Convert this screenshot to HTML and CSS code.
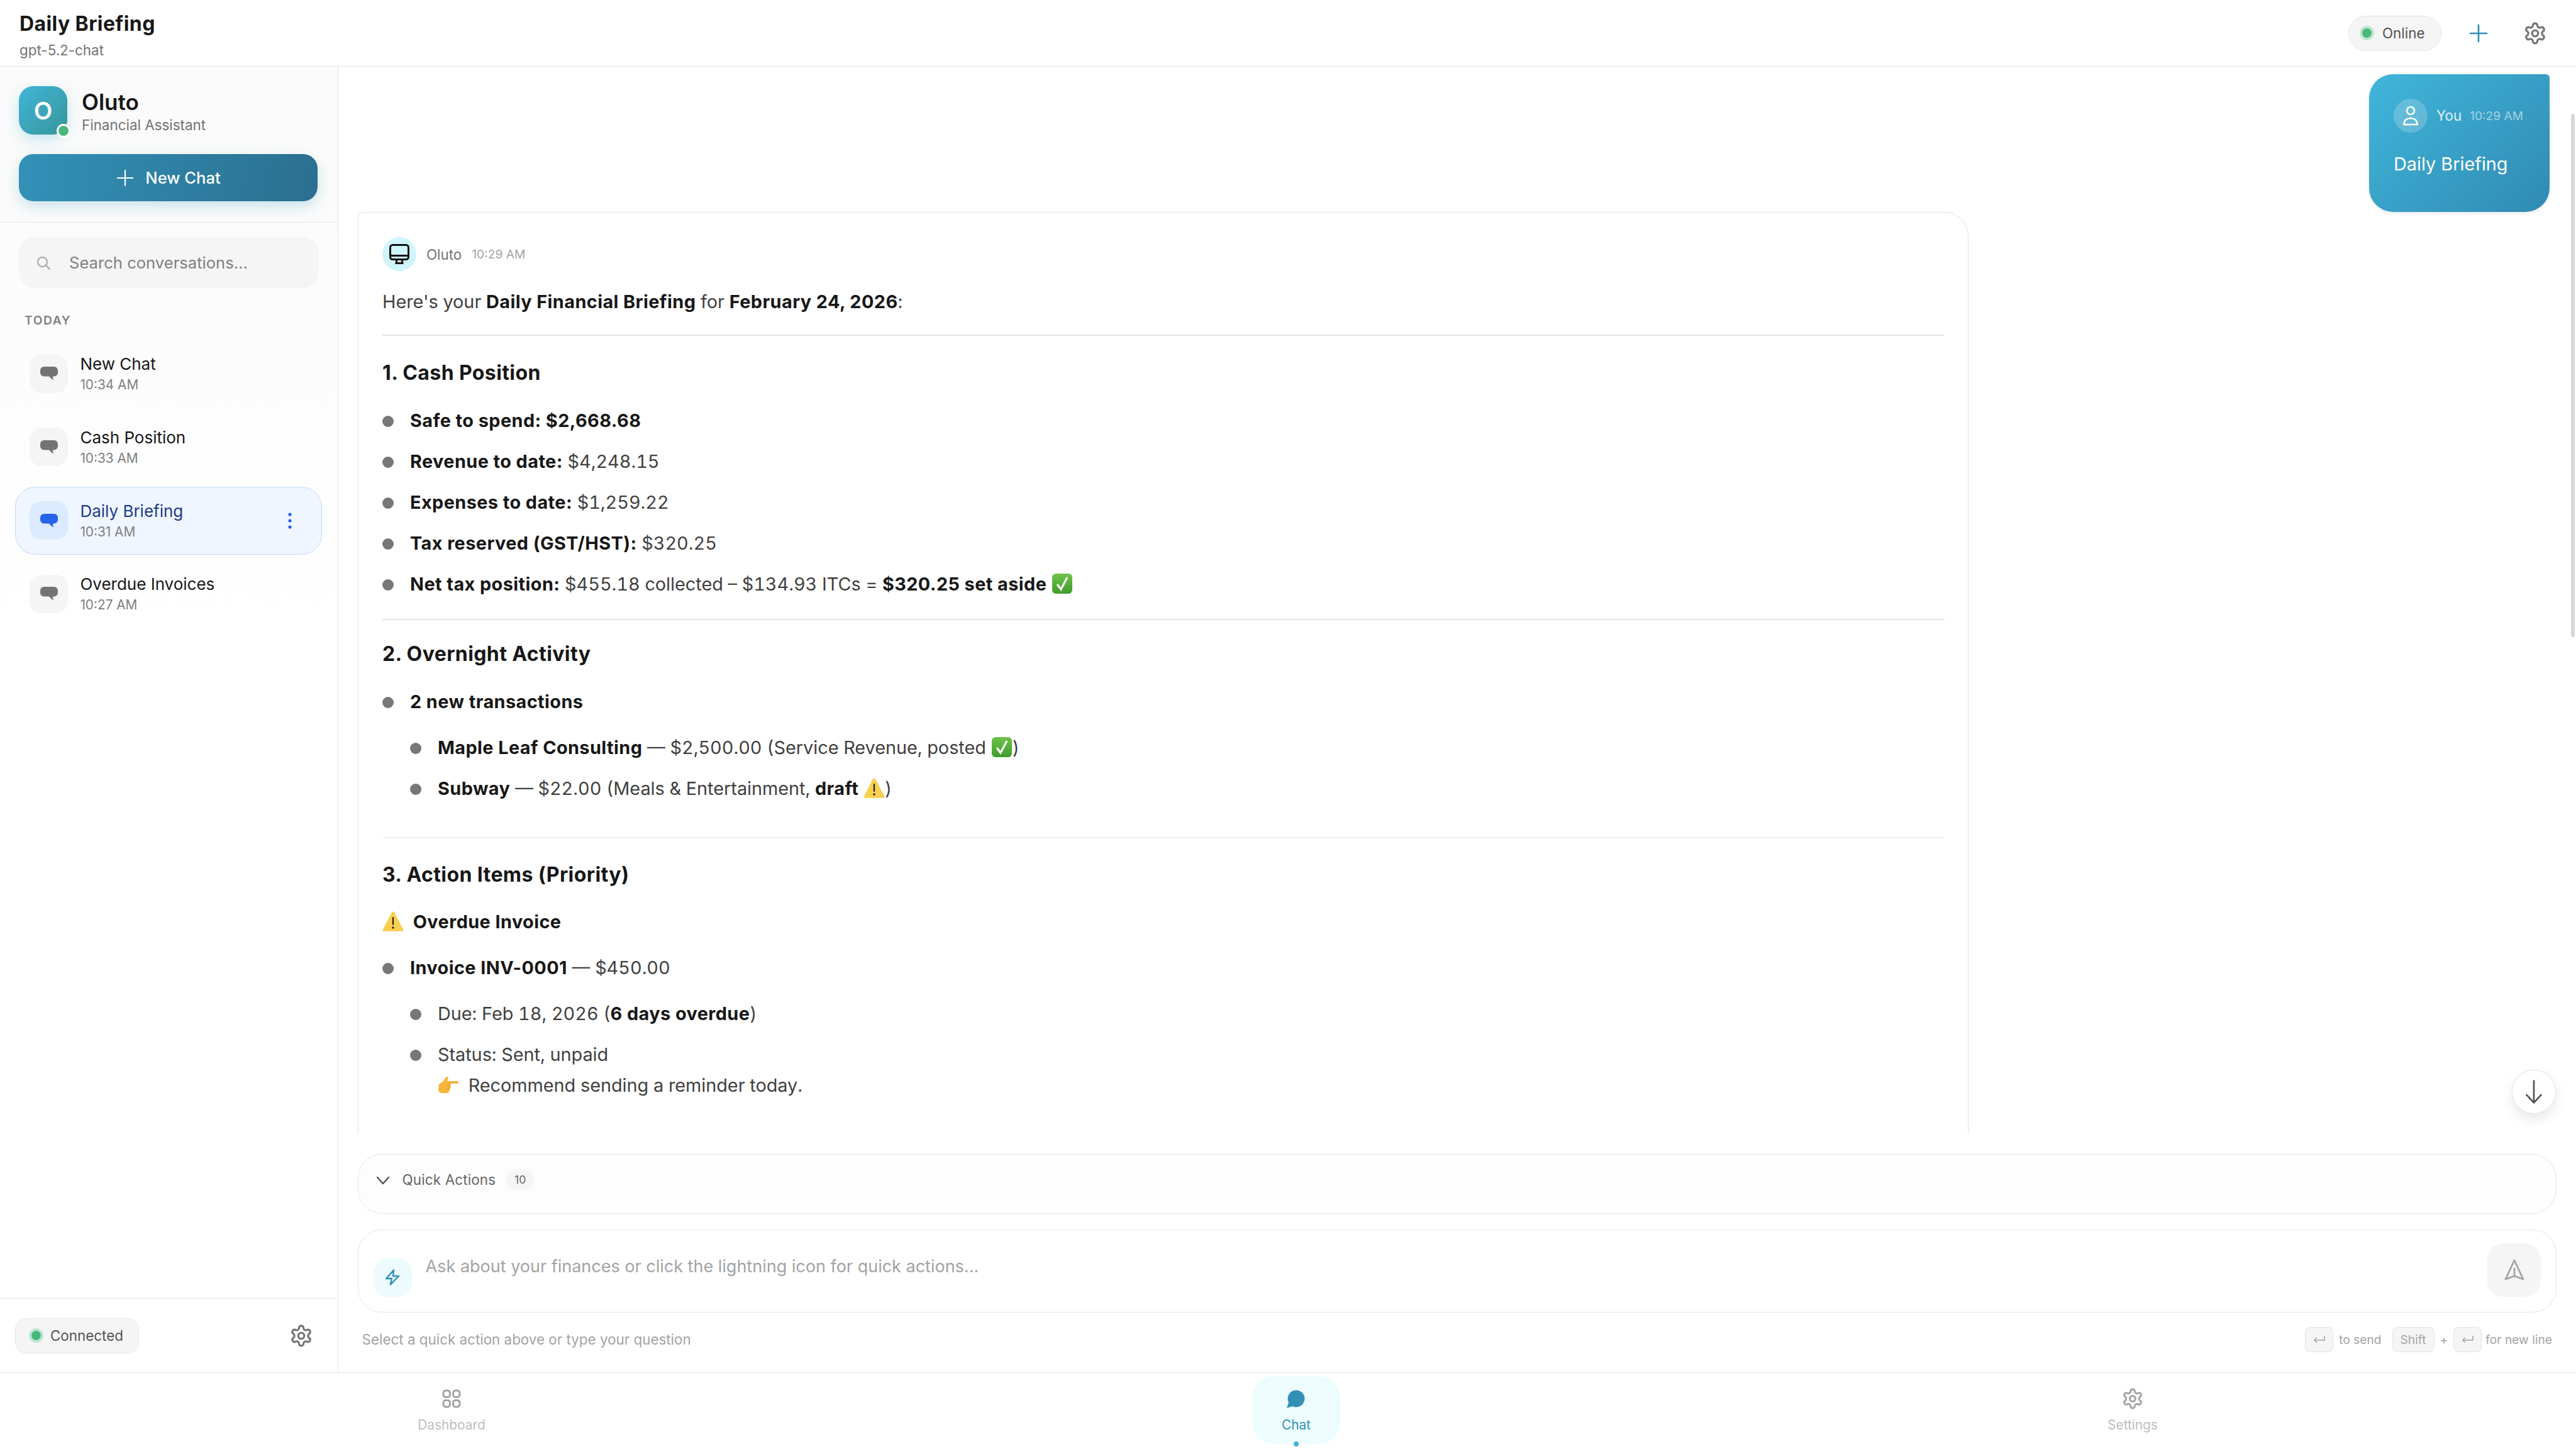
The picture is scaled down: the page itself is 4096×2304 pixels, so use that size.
FILE: index.html
```html
<!DOCTYPE html>
<html lang="en">
<head>
<meta charset="utf-8">
<title>Daily Briefing</title>
<link rel="stylesheet" href="styles.css">
</head>
<body>
<svg class="defs" aria-hidden="true">
  <symbol id="gear" viewBox="0 0 24 24"><path fill="none" stroke="currentColor" stroke-width="2" stroke-linecap="round" stroke-linejoin="round" d="M12.22 2h-.44a2 2 0 0 0-2 2v.18a2 2 0 0 1-1 1.73l-.43.25a2 2 0 0 1-2 0l-.15-.08a2 2 0 0 0-2.73.73l-.22.38a2 2 0 0 0 .73 2.73l.15.1a2 2 0 0 1 1 1.72v.51a2 2 0 0 1-1 1.74l-.15.09a2 2 0 0 0-.73 2.73l.22.38a2 2 0 0 0 2.73.73l.15-.08a2 2 0 0 1 2 0l.43.25a2 2 0 0 1 1 1.73V20a2 2 0 0 0 2 2h.44a2 2 0 0 0 2-2v-.18a2 2 0 0 1 1-1.73l.43-.25a2 2 0 0 1 2 0l.15.08a2 2 0 0 0 2.73-.73l.22-.39a2 2 0 0 0-.73-2.73l-.15-.08a2 2 0 0 1-1-1.74v-.5a2 2 0 0 1 1-1.74l.15-.09a2 2 0 0 0 .73-2.73l-.22-.38a2 2 0 0 0-2.73-.73l-.15.08a2 2 0 0 1-2 0l-.43-.25a2 2 0 0 1-1-1.73V4a2 2 0 0 0-2-2z"/><circle cx="12" cy="12" r="3" fill="none" stroke="currentColor" stroke-width="2"/></symbol>
  <symbol id="bubble" viewBox="0 0 28 22"><path fill="currentColor" d="M6 0h16a6 6 0 0 1 6 6v3.500a6 6 0 0 1-6 6h-2l.6 6.200-6.800-6.200H6a6 6 0 0 1-6-6V6a6 6 0 0 1 6-6z"/></symbol>
  <symbol id="check" viewBox="0 0 34 34"><defs><linearGradient id="chk" x1="0" y1="0" x2="0" y2="1"><stop offset="0" stop-color="#6fc24a"/><stop offset="1" stop-color="#3f9c2c"/></linearGradient></defs><rect x="1" y="1" width="32" height="32" rx="6" fill="url(#chk)"/><path d="M9 18l6 8L25 7" fill="none" stroke="#fff" stroke-width="3.200"/></symbol>
  <symbol id="warn" viewBox="0 0 34 34"><path d="M17 1.500c1 0 1.700.6 2.200 1.600l14 27c.6 1.400-.2 2.700-1.800 2.700H2.600c-1.600 0-2.400-1.300-1.800-2.700l14-27c.5-1 1.200-1.600 2.200-1.600z" fill="#f9cf50"/><rect x="15.900" y="10" width="2.200" height="13" rx="1.100" fill="#222"/><circle cx="17" cy="27" r="1.700" fill="#222"/></symbol>
  <symbol id="hand" viewBox="0 0 34 30"><path d="M2 14c2-2 5-3 7-5l4-6c1-2 4-1 4 1l-2 5h16c3 0 3 4 0 4H20c1 1 1 3 0 4 1 1 1 3-.5 4 .5 1.500 0 3-1.500 3.500 0 2-1 3.500-3 3.500H8c-4 0-7-2-7-6z" fill="#f6b63a"/><path d="M15 14h5M15 18h5M14 22h5" stroke="#d98f1f" stroke-width="1" fill="none"/></symbol>
</svg>

<header class="topbar">
  <div class="topbar-title">
    <h1 class="title">Daily Briefing</h1>
    <div class="subtitle">gpt-5.2-chat</div>
  </div>
  <div class="topbar-actions">
    <div class="status-pill"><span class="status-dot"></span>Online</div>
    <svg class="icon-plus" viewBox="0 0 30 30"><path d="M15 2v26M2 15h26" fill="none" stroke="currentColor" stroke-width="2.600" stroke-linecap="round"/></svg>
    <svg class="icon-gear"><use href="#gear"/></svg>
  </div>
</header>

<div class="workspace">
  <aside class="sidebar">
    <div class="side-head">
      <div class="brand">
        <div class="brand-logo">O<span class="brand-online"></span></div>
        <div>
          <div class="brand-name">Oluto</div>
          <div class="brand-role">Financial Assistant</div>
        </div>
      </div>
      <button class="new-chat">
        <svg class="new-plus" viewBox="0 0 30 30"><path d="M15 3v24M3 15h24" fill="none" stroke="currentColor" stroke-width="2.200" stroke-linecap="round"/></svg>
        New Chat
      </button>
    </div>
    <div class="side-body">
      <div class="search">
        <svg class="search-icon" viewBox="0 0 24 24"><circle cx="10.500" cy="10.500" r="7.500" fill="none" stroke="currentColor" stroke-width="2"/><path d="M16 16l6 6" stroke="currentColor" stroke-width="2" stroke-linecap="round"/></svg>
        Search conversations...
      </div>
      <div class="group-label">TODAY</div>
      <div class="conv-list">
        <div class="conv">
          <div class="conv-icon"><svg class="conv-bubble"><use href="#bubble"/></svg></div>
          <div><div class="conv-title">New Chat</div><div class="conv-time">10:34 AM</div></div>
        </div>
        <div class="conv">
          <div class="conv-icon"><svg class="conv-bubble"><use href="#bubble"/></svg></div>
          <div><div class="conv-title">Cash Position</div><div class="conv-time">10:33 AM</div></div>
        </div>
        <div class="conv active">
          <div class="conv-icon"><svg class="conv-bubble"><use href="#bubble"/></svg></div>
          <div><div class="conv-title">Daily Briefing</div><div class="conv-time">10:31 AM</div></div>
          <svg class="conv-more" viewBox="0 0 8 28"><circle cx="4" cy="4" r="2.600" fill="currentColor"/><circle cx="4" cy="14" r="2.600" fill="currentColor"/><circle cx="4" cy="24" r="2.600" fill="currentColor"/></svg>
        </div>
        <div class="conv">
          <div class="conv-icon"><svg class="conv-bubble"><use href="#bubble"/></svg></div>
          <div><div class="conv-title">Overdue Invoices</div><div class="conv-time">10:27 AM</div></div>
        </div>
      </div>
    </div>
    <div class="side-foot">
      <div class="conn-pill"><span class="status-dot"></span>Connected</div>
      <svg class="icon-gear"><use href="#gear"/></svg>
    </div>
  </aside>

  <main class="main">
    <section class="messages">
      <div class="user-msg">
        <div class="msg-head">
          <div class="user-avatar"><svg class="user-glyph" viewBox="0 0 26 32"><circle cx="13" cy="8" r="6" fill="none" stroke="#fff" stroke-width="2.600"/><path d="M2.300 30c0-6.500 4.500-10 10.700-10s10.700 3.500 10.700 10z" fill="none" stroke="#fff" stroke-width="2.600" stroke-linejoin="round"/></svg></div>
          <span class="user-name">You</span>
          <span class="user-time">10:29 AM</span>
        </div>
        <div class="user-text">Daily Briefing</div>
      </div>

      <article class="bot-msg">
        <div class="msg-head">
          <div class="bot-avatar"><svg class="bot-glyph" viewBox="0 0 32 32"><rect x="1.500" y="1.500" width="29" height="23" rx="4" fill="none" stroke="#111" stroke-width="3"/><path d="M2 18.500h28" stroke="#111" stroke-width="3"/><path d="M12 25l-1 5.500h10l-1-5.500" fill="none" stroke="#111" stroke-width="3"/></svg></div>
          <span class="bot-name">Oluto</span>
          <span class="bot-time">10:29 AM</span>
        </div>
        <p class="intro">Here's your <b>Daily Financial Briefing</b> for <b>February 24, 2026</b>:</p>
        <hr class="rule rule-first">
        <h2 class="sec">1. Cash Position</h2>
        <ul class="list">
          <li><b>Safe to spend: $2,668.68</b></li>
          <li><b>Revenue to date:</b> $4,248.15</li>
          <li><b>Expenses to date:</b> $1,259.22</li>
          <li><b>Tax reserved (GST/HST):</b> $320.25</li>
          <li><b>Net tax position:</b> $455.18 collected – $134.93 ITCs = <b>$320.25 set aside</b> <svg class="emoji" role="img" aria-label="check mark"><use href="#check"/></svg></li>
        </ul>
        <hr class="rule">
        <h2 class="sec sec-tight">2. Overnight Activity</h2>
        <ul class="list">
          <li><b>2 new transactions</b>
            <ul class="sublist">
              <li><b>Maple Leaf Consulting</b> — $2,500.00 (Service Revenue, posted <svg class="emoji" role="img" aria-label="check mark"><use href="#check"/></svg>)</li>
              <li><b>Subway</b> — $22.00 (Meals &amp; Entertainment, <b>draft</b> <svg class="emoji" role="img" aria-label="warning"><use href="#warn"/></svg>)</li>
            </ul>
          </li>
        </ul>
        <hr class="rule rule-wide">
        <h2 class="sec">3. Action Items (Priority)</h2>
        <p class="callout"><svg class="emoji emoji-lead" role="img" aria-label="warning"><use href="#warn"/></svg> <b>Overdue Invoice</b></p>
        <ul class="list">
          <li><b>Invoice INV-0001</b> — $450.00
            <ul class="sublist">
              <li>Due: Feb 18, 2026 (<b>6 days overdue</b>)</li>
              <li>Status: Sent, unpaid<br><svg class="emoji emoji-lead" role="img" aria-label="pointing right"><use href="#hand"/></svg> Recommend sending a reminder today.</li>
            </ul>
          </li>
        </ul>
      </article>

      <button class="scroll-down" aria-label="Scroll down"><svg class="down-glyph" viewBox="0 0 32 46"><path d="M16 2v42M2 29l14 15 14-15" fill="none" stroke="currentColor" stroke-width="3.200" stroke-linecap="round" stroke-linejoin="round"/></svg></button>
      <span class="scroll-thumb"></span>
    </section>

    <section class="composer">
      <div class="quick">
        <svg class="chev" viewBox="0 0 22 14"><path d="M2 2l9 10 9-10" fill="none" stroke="currentColor" stroke-width="2.400" stroke-linecap="round" stroke-linejoin="round"/></svg>
        <span class="quick-label">Quick Actions</span>
        <span class="quick-count">10</span>
      </div>
      <div class="input-box">
        <button class="bolt-btn" aria-label="Quick actions"><svg class="bolt" viewBox="0 0 24 26"><path d="M14 1.500L2 15h9l-2 9.500L22 11h-9z" fill="none" stroke="currentColor" stroke-width="2.400" stroke-linejoin="round"/></svg></button>
        <div class="placeholder">Ask about your finances or click the lightning icon for quick actions...</div>
        <button class="send-btn" aria-label="Send"><svg class="send" viewBox="0 0 34 34"><path d="M17 2l14 30-14-5-14 5z" fill="none" stroke="currentColor" stroke-width="2.800" stroke-linejoin="round"/><path d="M17 27V14" stroke="currentColor" stroke-width="2.800"/></svg></button>
      </div>
      <div class="hints">
        <span>Select a quick action above or type your question</span>
        <div class="keys">
          <kbd class="key key-enter"><svg class="enter" viewBox="0 0 20 14"><path d="M18 1v7H2M6 4L2 8l4 4" fill="none" stroke="currentColor" stroke-width="1.500"/></svg></kbd>
          <span class="key-text">to send</span>
          <kbd class="key key-shift">Shift</kbd>
          <span>+</span>
          <kbd class="key key-enter key-last"><svg class="enter" viewBox="0 0 20 14"><path d="M18 1v7H2M6 4L2 8l4 4" fill="none" stroke="currentColor" stroke-width="1.500"/></svg></kbd>
          <span class="key-text">for new line</span>
        </div>
      </div>
    </section>
  </main>
</div>

<nav class="tabbar">
  <div class="tab">
    <svg class="tab-grid" viewBox="0 0 30 30"><rect x="2" y="2" width="10.500" height="10.500" rx="4" fill="none" stroke="currentColor" stroke-width="3"/><rect x="17.500" y="2" width="10.500" height="10.500" rx="4" fill="none" stroke="currentColor" stroke-width="3"/><rect x="2" y="17.500" width="10.500" height="10.500" rx="4" fill="none" stroke="currentColor" stroke-width="3"/><rect x="17.500" y="17.500" width="10.500" height="10.500" rx="4" fill="none" stroke="currentColor" stroke-width="3"/></svg>
    <span class="tab-label">Dashboard</span>
  </div>
  <div class="tab tab-active">
    <svg class="tab-chat" viewBox="0 0 24 24"><path fill="currentColor" d="M7.900 20A9 9 0 1 0 4 16.100L2 22z"/></svg>
    <span class="tab-label">Chat</span>
    <span class="tab-dot"></span>
  </div>
  <div class="tab">
    <svg class="tab-gear"><use href="#gear"/></svg>
    <span class="tab-label">Settings</span>
  </div>
</nav>
</body>
</html>
```

FILE: styles.css
```css
* { box-sizing: border-box; }
html, body { margin: 0; padding: 0; }
body {
  width: 4096px;
  height: 2304px;
  overflow: hidden;
  display: flex;
  flex-direction: column;
  background: #fff;
  color: #171717;
  font-family: Inter, "Liberation Sans", sans-serif;
}
.defs { width: 0; height: 0; position: absolute; }
button { border: 0; padding: 0; font: inherit; }

.topbar {
  height: 106.400px;
  flex: none;
  display: flex;
  justify-content: space-between;
  align-items: center;
  padding: 0 46px 0 31px;
  border-bottom: 1.600px solid #e5e5e5;
}
.topbar-title { padding-top: 6px; }
.title { margin: 0; font-size: 32px; line-height: 42px; font-weight: 700; letter-spacing: 0.4px; }
.subtitle { margin-top: 6px; font-size: 22.400px; line-height: 30px; color: #737373; }
.topbar-actions { display: flex; align-items: center; }
.status-pill {
  width: 148px;
  height: 56px;
  display: flex;
  align-items: center;
  padding-left: 21px;
  gap: 17px;
  border-radius: 28px;
  background: #f5f5f5;
  border: 1.600px solid #e5e5e5;
  font-size: 22.400px;
  font-weight: 400;
  color: #525252;
}
.status-dot {
  width: 15px;
  height: 15px;
  border-radius: 50%;
  background: #48b87c;
  box-shadow: 0 0 0 4px #bfe6d1;
}
.icon-plus { width: 30px; height: 30px; margin-left: 44px; color: #3090b5; }
.icon-gear { width: 38px; height: 38px; color: #737373; }
.topbar-actions .icon-gear { margin-left: 56px; }

.workspace { flex: 1; display: flex; min-height: 0; }

.sidebar {
  width: 537.600px;
  flex: none;
  display: flex;
  flex-direction: column;
  border-right: 1.600px solid #e5e5e5;
  background: linear-gradient(#fafafa 0, #fff 900px);
}
.side-head { height: 248px; padding: 31px 30px 0; border-bottom: 1.600px solid #e5e5e5; }
.brand { display: flex; align-items: center; gap: 23px; }
.brand-logo {
  position: relative;
  width: 77px;
  height: 77px;
  flex: none;
  display: flex;
  align-items: center;
  justify-content: center;
  border-radius: 23px;
  background: linear-gradient(135deg, #40b5da, #379698);
  box-shadow: 0 8px 22px rgba(62, 180, 214, 0.28);
  color: #fff;
  font-size: 38.400px;
  font-weight: 600;
}
.brand-online {
  position: absolute;
  right: -5px;
  bottom: -5px;
  width: 22px;
  height: 22px;
  border-radius: 50%;
  background: #48b87c;
  border: 3px solid #fff;
}
.brand-name { margin-top: 1px; font-size: 35px; line-height: 44px; font-weight: 600; }
.brand-role { font-size: 22.400px; line-height: 29px; color: #737373; }
.new-chat {
  width: 475px;
  height: 75px;
  margin-top: 31px;
  display: flex;
  align-items: center;
  justify-content: center;
  gap: 17px;
  border-radius: 23px;
  background: linear-gradient(100deg, #3391b8, #2a6f90);
  box-shadow: 0 8px 22px rgba(50, 150, 190, 0.25);
  color: #fff;
  font-size: 25.600px;
  font-weight: 500;
}
.new-plus { width: 30px; height: 30px; }

.side-body { flex: 1; min-height: 0; padding: 23px 24px 0; }
.search {
  height: 81px;
  margin: 0 6px;
  display: flex;
  align-items: center;
  gap: 29px;
  padding-left: 27px;
  border-radius: 25px;
  background: #f5f5f5;
  color: #808080;
  font-size: 25.600px;
}
.search-icon { width: 24px; height: 24px; color: #a3a3a3; }
.group-label {
  margin: 34px 0 0 15px;
  height: 34px;
  line-height: 34px;
  font-size: 19.200px;
  font-weight: 600;
  letter-spacing: 1.600px;
  color: #808080;
}
.conv-list { margin-top: 14px; display: flex; flex-direction: column; gap: 8.600px; }
.conv {
  height: 108px;
  display: flex;
  align-items: center;
  gap: 19px;
  padding: 0 22.400px;
  border-radius: 32px;
  border: 1.600px solid transparent;
  width: 488px;
  color: #737373;
}
.conv-icon {
  width: 61px;
  height: 61px;
  flex: none;
  display: flex;
  align-items: center;
  justify-content: center;
  border-radius: 19px;
  background: #f5f5f5;
}
.conv-bubble { width: 28px; height: 22px; }
.conv-title { font-size: 26px; line-height: 35px; font-weight: 400; color: #171717; }
.conv-time { font-size: 20.800px; line-height: 31px; color: #808080; }
.conv.active { background: #eff6ff; border-color: #bfdbfe; color: #2563eb; }
.conv.active .conv-icon { background: #dbeafe; }
.conv.active .conv-title { color: #1e3a8a; }
.conv-more { width: 8px; height: 28px; margin-left: auto; margin-right: 24px; }

.side-foot {
  height: 118px;
  flex: none;
  display: flex;
  align-items: center;
  justify-content: space-between;
  padding: 0 39px 0 24px;
  border-top: 1.600px solid #e5e5e5;
  background: #fff;
}
.conn-pill {
  width: 197px;
  height: 56px;
  display: flex;
  align-items: center;
  gap: 15px;
  padding-left: 25px;
  border-radius: 18px;
  background: #f5f5f5;
  border: 1.600px solid #e5e5e5;
  font-size: 22.400px;
  font-weight: 400;
  color: #525252;
}

.main { flex: 1; min-width: 0; display: flex; flex-direction: column; }
.messages {
  position: relative;
  height: 1695.600px;
  flex: none;
  overflow: hidden;
  display: flex;
  flex-direction: column;
  padding: 11.600px 42px 0 31px;
}
.user-msg {
  width: 287px;
  height: 219px;
  flex: none;
  align-self: flex-end;
  padding: 39px 0 38px 39px;
  border-radius: 38px 6px 38px 38px;
  background: linear-gradient(135deg, #40b6da, #308ab3);
  box-shadow: 0 2px 6px rgba(0, 0, 0, 0.1);
  color: #fff;
}
.msg-head { display: flex; align-items: center; white-space: nowrap; }
.user-avatar {
  width: 54px;
  height: 54px;
  display: flex;
  align-items: center;
  justify-content: center;
  border-radius: 50%;
  background: rgba(255, 255, 255, 0.2);
}
.user-glyph { width: 26px; height: 32px; }
.user-name { margin-left: 14px; font-size: 22.400px; font-weight: 400; color: rgba(255, 255, 255, 0.85); }
.user-time { margin-left: 13px; font-size: 19.200px; color: rgba(255, 255, 255, 0.55); }
.user-text { margin-top: 27px; font-size: 28.800px; line-height: 46px; }

.bot-msg {
  width: 2561px;
  flex: none;
  padding: 39.400px 37px 0 38.400px;
  border: 1.600px solid #e5e5e5;
  border-bottom: 0;
  border-radius: 8px 38px 0 0;
  box-shadow: 0 1px 4px rgba(0, 0, 0, 0.05);
  height: 1600px;
}
.bot-avatar {
  width: 54px;
  height: 54px;
  display: flex;
  align-items: center;
  justify-content: center;
  border-radius: 50%;
  background: #cff5fc;
}
.bot-glyph { width: 32px; height: 32px; }
.bot-name { margin-left: 16px; font-size: 22.400px; font-weight: 400; color: #737373; }
.bot-time { margin-left: 16px; font-size: 19.200px; color: #a3a3a3; }

.intro, .callout, .list li {
  font-size: 28.800px;
  line-height: 49px;
  color: #404040;
  font-variant-numeric: tabular-nums;
}
.intro { margin: 23.600px 0 0; }
b { font-weight: 700; color: #171717; letter-spacing: 0.45px; font-variant-numeric: normal; }
.rule { height: 1.600px; border: 0; margin: 31px 0 0; background: #e5e5e5; }
.rule-first { margin-top: 28.400px; }
.rule-wide { margin-top: 53px; }
.sec { margin: 36px 0 0; font-size: 32px; line-height: 45px; font-weight: 700; letter-spacing: 0.4px; color: #171717; }
.sec-tight { margin-top: 31px; }
.rule-wide + .sec { margin-top: 36px; }
.list, .sublist { list-style: none; margin: 0; padding: 0; }
.list { margin-top: 29px; padding-left: 44px; }
.sublist { margin-top: 24px; padding-left: 44px; }
.list li { margin-bottom: 16px; }
.list > li:last-child, .sublist > li:last-child { margin-bottom: 0; }
.list li::before {
  content: "";
  display: inline-block;
  width: 18px;
  height: 18px;
  margin-left: -44px;
  margin-right: 26px;
  border-radius: 50%;
  background: #777;
}
.callout { margin: 27.500px 0 0; }
.callout + .list { margin-top: 24px; }
.emoji { width: 34px; height: 34px; vertical-align: -6px; }
.emoji-lead { margin-right: 7px; }

.scroll-down {
  position: absolute;
  left: 3456px;
  top: 1595px;
  width: 70px;
  height: 70px;
  display: flex;
  align-items: center;
  justify-content: center;
  border-radius: 50%;
  background: #fff;
  border: 1.600px solid #e5e5e5;
  box-shadow: 0 8px 20px rgba(0, 0, 0, 0.1);
  color: #525252;
}
.down-glyph { width: 32px; height: 38px; }
.scroll-thumb {
  position: absolute;
  right: 2px;
  top: 75px;
  width: 6px;
  height: 832px;
  border-radius: 3px;
  background: #d6d6db;
}

.composer { flex: 1; min-height: 0; padding: 33px 31px 0; }
.quick {
  height: 95px;
  display: flex;
  align-items: flex-start;
  padding: 24px 0 0 28px;
  border: 1.600px solid #e5e5e5;
  border-radius: 38px;
  background: #fdfdfd;
  font-size: 22.400px;
  color: #666;
}
.chev { width: 22px; height: 14px; margin-top: 10px; color: #525252; }
.quick-label { margin-left: 20px; line-height: 32px; font-weight: 400; letter-spacing: 0.15px; }
.quick-count {
  margin-left: 17px;
  width: 44px;
  height: 32px;
  line-height: 32px;
  text-align: center;
  border-radius: 16px;
  background: #f5f5f5;
  font-size: 17.600px;
  font-weight: 400;
}
.input-box {
  position: relative;
  height: 132px;
  margin-top: 25px;
  display: flex;
  align-items: flex-end;
  padding: 0 24px 24px;
  border: 1.600px solid #e5e5e5;
  border-radius: 38px;
  background: #fff;
}
.bolt-btn {
  width: 61px;
  height: 61px;
  flex: none;
  display: flex;
  align-items: center;
  justify-content: center;
  border-radius: 22px;
  background: #edfbfe;
  color: #3090b5;
}
.bolt { width: 24px; height: 26px; }
.placeholder {
  align-self: flex-start;
  margin: 39px 0 0 22px;
  line-height: 38px;
  font-size: 27px;
  color: #a3a3a3;
}
.send-btn {
  width: 85px;
  height: 85px;
  margin-left: auto;
  display: flex;
  align-items: center;
  justify-content: center;
  border-radius: 25px;
  background: #f5f5f5;
  color: #a3a3a3;
}
.send { width: 34px; height: 34px; }
.hints {
  margin-top: 23px;
  display: flex;
  justify-content: space-between;
  align-items: center;
  padding: 0 8px 0 7px;
  font-size: 22.400px;
  color: #a3a3a3;
}
.keys { display: flex; align-items: center; gap: 9px; font-size: 19.200px; margin-right: -1px; }
.key {
  height: 40px;
  display: flex;
  align-items: center;
  justify-content: center;
  border-radius: 8px;
  background: #f5f5f5;
  border: 1.600px solid #e5e5e5;
  font-family: inherit;
  font-size: 19.200px;
}
.key-enter { width: 45px; }
.key-shift { width: 67px; margin-left: 8px; }
.key-last { margin-right: -3px; }
.enter { width: 20px; height: 14px; }

.tabbar {
  height: 122px;
  flex: none;
  display: grid;
  grid-template-columns: 1436px 1250px 1410px;
  justify-items: center;
  border-top: 1.600px solid #e5e5e5;
  background: #fff;
}
.tab {
  position: relative;
  height: 108px;
  margin-top: 5.400px;
  padding-top: 21px;
  display: flex;
  flex-direction: column;
  align-items: center;
  color: #a3a3a3;
}
.tab-grid { width: 30px; height: 30px; }
.tab-gear { width: 36px; height: 36px; margin-top: -3px; margin-bottom: -3px; }
.tab-chat { width: 36px; height: 36px; margin-top: -3px; margin-bottom: -3px; }
.tab-label { margin-top: 14px; font-size: 20.800px; line-height: 26px; font-weight: 400; color: #bdbdbd; }
.tab-active {
  width: 139px;
  border-radius: 34px;
  background: #ecfcff;
  color: #3390b5;
}
.tab-active .tab-label { color: #3390b5; }
.tab-dot {
  position: absolute;
  left: 65.500px;
  bottom: -4px;
  width: 8px;
  height: 8px;
  border-radius: 50%;
  background: #3eb4d6;
}
```
